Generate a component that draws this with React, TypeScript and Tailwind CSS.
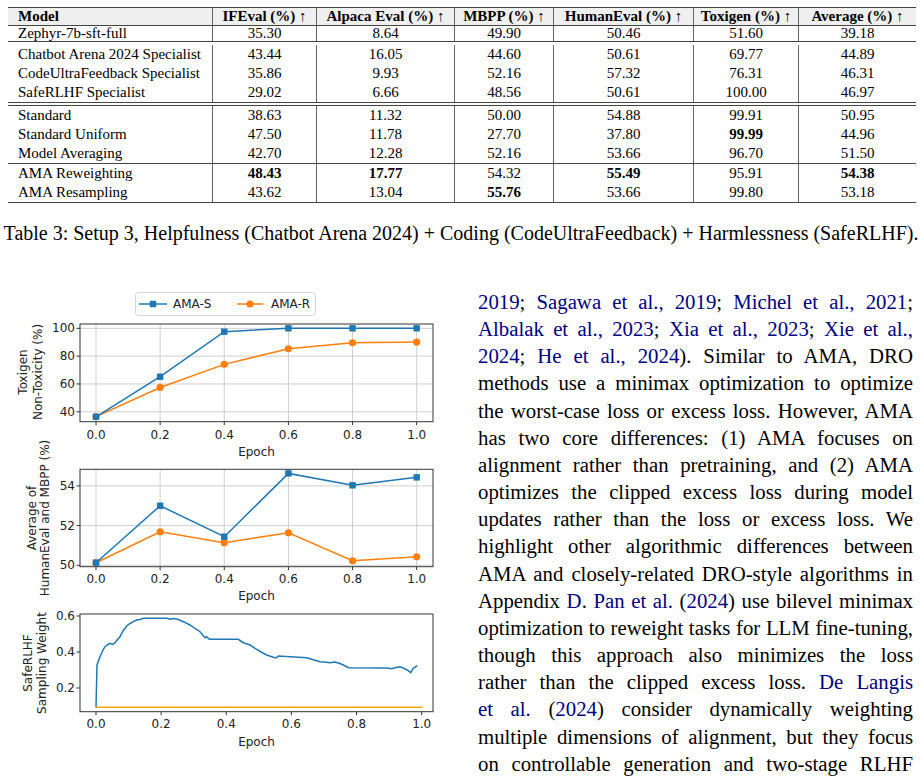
import React from 'react'

const BLUE = '#1f77b4'
const ORANGE = '#ff7f0e'
const SANS = "'DejaVu Sans', 'Liberation Sans', sans-serif"

type Tick = { p: number; label: string }

function Axes({
  top,
  bottom,
  xticks,
  yticks,
  grid,
  labelY,
  epochY,
  ylabels,
  ylabelMid,
}: {
  top: number
  bottom: number
  xticks: Tick[]
  yticks: Tick[]
  grid: boolean
  labelY: number
  epochY: number
  ylabels: { x: number; text: string }[]
  ylabelMid: number
}) {
  const left = 80
  const right = 433
  return (
    <g fontFamily={SANS} fontSize={12} fill="#222">
      {grid &&
        xticks.map((t) => (
          <line key={'gx' + t.label} x1={t.p} x2={t.p} y1={top} y2={bottom} stroke="#cfcfcf" strokeWidth={1} />
        ))}
      {grid &&
        yticks.map((t) => (
          <line key={'gy' + t.label} x1={left} x2={right} y1={t.p} y2={t.p} stroke="#cfcfcf" strokeWidth={1} />
        ))}
      <rect x={left} y={top} width={right - left} height={bottom - top} fill="none" stroke="#333" strokeWidth={1} />
      {xticks.map((t) => (
        <g key={'xt' + t.label}>
          <line x1={t.p} x2={t.p} y1={bottom} y2={bottom + 3.5} stroke="#333" />
          <text x={t.p} y={labelY} textAnchor="middle" dominantBaseline="central">
            {t.label}
          </text>
        </g>
      ))}
      {yticks.map((t) => (
        <g key={'yt' + t.label}>
          <line x1={left - 3.5} x2={left} y1={t.p} y2={t.p} stroke="#333" />
          <text x={75} y={t.p} textAnchor="end" dominantBaseline="central">
            {t.label}
          </text>
        </g>
      ))}
      <text x={(left + right) / 2} y={epochY} textAnchor="middle" dominantBaseline="central">
        Epoch
      </text>
      {ylabels.map((l) => (
        <text
          key={l.text}
          x={l.x}
          y={ylabelMid}
          textAnchor="middle"
          dominantBaseline="central"
          transform={`rotate(-90 ${l.x} ${ylabelMid})`}
        >
          {l.text}
        </text>
      ))}
    </g>
  )
}

const ex = (e: number) => 96 + e * 320.7
const epochs = [0, 0.2, 0.4, 0.6, 0.8, 1.0]
const xt: Tick[] = epochs.map((e) => ({ p: ex(e), label: e.toFixed(1) }))

function Series({ pts, color, marker }: { pts: [number, number][]; color: string; marker: 's' | 'o' }) {
  return (
    <g>
      <polyline points={pts.map((p) => p.join(',')).join(' ')} fill="none" stroke={color} strokeWidth={1.5} />
      {pts.map(([x, y], i) =>
        marker === 's' ? (
          <rect key={i} x={x - 3.2} y={y - 3.2} width={6.4} height={6.4} fill={color} />
        ) : (
          <circle key={i} cx={x} cy={y} r={3.6} fill={color} />
        ),
      )}
    </g>
  )
}

function ToxigenChart() {
  const y = (v: number) => 328.3 + (100 - v) * 1.3917
  const s = [36.4, 65.2, 97.6, 100, 100, 100]
  const r = [36.5, 57.5, 74.1, 85.3, 89.6, 90.1]
  return (
    <svg width={450} height={175} viewBox="0 285 450 175" className="block overflow-visible">
      <rect x={135.5} y={292.5} width={180} height={23} rx={3} fill="#fff" stroke="#d4d4d4" />
      <line x1={139} x2={167} y1={304} y2={304} stroke={BLUE} strokeWidth={1.5} />
      <rect x={149.8} y={300.8} width={6.4} height={6.4} fill={BLUE} />
      <text x={173} y={304} fontFamily={SANS} fontSize={12} fill="#222" dominantBaseline="central">
        AMA-S
      </text>
      <line x1={237} x2={263} y1={304} y2={304} stroke={ORANGE} strokeWidth={1.5} />
      <circle cx={250} cy={304} r={3.6} fill={ORANGE} />
      <text x={271} y={304} fontFamily={SANS} fontSize={12} fill="#222" dominantBaseline="central">
        AMA-R
      </text>
      <Axes
        top={324}
        bottom={421.7}
        xticks={xt}
        yticks={[100, 80, 60, 40].map((v) => ({ p: y(v), label: String(v) }))}
        grid
        labelY={435}
        epochY={452}
        ylabels={[
          { x: 23, text: 'Toxigen' },
          { x: 38, text: 'Non-Toxicity (%)' },
        ]}
        ylabelMid={372}
      />
      <Series pts={epochs.map((e, i) => [ex(e), y(r[i])])} color={ORANGE} marker="o" />
      <Series pts={epochs.map((e, i) => [ex(e), y(s[i])])} color={BLUE} marker="s" />
    </svg>
  )
}

function CodingChart() {
  const y = (v: number) => 565.3 - (v - 50) * 19.85
  const s = [50.13, 53.0, 51.44, 54.63, 54.03, 54.43]
  const r = [50.13, 51.69, 51.14, 51.64, 50.23, 50.43]
  return (
    <svg width={450} height={145} viewBox="0 460 450 145" className="block overflow-visible">
      <Axes
        top={469.3}
        bottom={566.7}
        xticks={xt}
        yticks={[54, 52, 50].map((v) => ({ p: y(v), label: String(v) }))}
        grid
        labelY={578.5}
        epochY={596}
        ylabels={[
          { x: 31.7, text: 'Average of' },
          { x: 45, text: 'HumanEval and MBPP (%)' },
        ]}
        ylabelMid={518}
      />
      <Series pts={epochs.map((e, i) => [ex(e), y(r[i])])} color={ORANGE} marker="o" />
      <Series pts={epochs.map((e, i) => [ex(e), y(s[i])])} color={BLUE} marker="s" />
    </svg>
  )
}

// traced from the sampling weight curve
const weightCurve: [number, number][] = [
  [96, 707.3], [97, 665], [100, 656.7], [103, 650], [105, 646.7], [108, 644.5], [110, 643.3],
  [112.7, 644.5], [115, 642.7], [117, 640], [120, 636.7], [123, 631], [126.7, 626], [130, 623.5],
  [133.3, 621.7], [136.7, 620], [140, 619.5], [143.3, 618.3], [166.7, 618.3], [170, 619.3],
  [173, 618.6], [176.7, 619], [180, 620.2], [183.3, 621.7], [190, 625], [195, 628.5], [200, 631.7],
  [205, 637.7], [206.7, 636.7], [209.3, 639.3], [238.3, 639.3], [243.3, 642.7], [250, 645],
  [256.7, 649.3], [262, 652.5], [266.7, 655], [273.3, 657.3], [276, 658], [278.3, 656], [306.7, 657.7],
  [311.7, 659.3], [316, 660.5], [320, 661.7], [325, 662], [330, 662.7], [335, 662], [340, 663.5],
  [343.3, 665], [348.3, 667.7], [386.7, 668], [391.7, 668.7], [395, 667.7], [400, 666.7], [403.3, 668],
  [408.3, 670.7], [410.7, 672.7], [413.3, 668.3], [417.3, 665.7],
]

function WeightChart() {
  const x3 = (e: number) => 96 + e * 325.7
  return (
    <svg width={450} height={155} viewBox="0 605 450 155" className="block overflow-visible">
      <Axes
        top={614}
        bottom={711.7}
        xticks={epochs.map((e) => ({ p: x3(e), label: e.toFixed(1) }))}
        yticks={[
          { p: 616, label: '0.6' },
          { p: 652, label: '0.4' },
          { p: 688, label: '0.2' },
        ]}
        grid={false}
        labelY={724.3}
        epochY={741.7}
        ylabels={[
          { x: 28, text: 'SafeRLHF' },
          { x: 41.7, text: 'Sampling Weight' },
        ]}
        ylabelMid={663}
      />
      <line x1={96} x2={422.7} y1={707.3} y2={707.3} stroke="#ffa500" strokeWidth={1.5} />
      <polyline points={weightCurve.map((p) => p.join(',')).join(' ')} fill="none" stroke={BLUE} strokeWidth={1.5} />
    </svg>
  )
}

const cols = 'grid grid-cols-[205px_104px_138px_99px_140px_105px_117px]'
const headers = ['IFEval', 'Alpaca Eval', 'MBPP', 'HumanEval', 'Toxigen', 'Average']

type Row = { name: string; v: string[] }
const groups: { rows: Row[]; cls: string; first?: string }[] = [
  { rows: [{ name: 'Zephyr-7b-sft-full', v: ['35.30', '8.64', '49.90', '50.46', '51.60', '39.18'] }], cls: 'border-b border-[#444]', first: 'h-[15px] leading-[15px]' },
  {
    rows: [
      { name: 'Chatbot Arena 2024 Specialist', v: ['43.44', '16.05', '44.60', '50.61', '69.77', '44.89'] },
      { name: 'CodeUltraFeedback Specialist', v: ['35.86', '9.93', '52.16', '57.32', '76.31', '46.31'] },
      { name: 'SafeRLHF Specialist', v: ['29.02', '6.66', '48.56', '50.61', '100.00', '46.97'] },
    ],
    cls: 'border-b-[4px] border-double border-[#444]',
    first: 'h-[22px] pt-[3px] leading-[19px]',
  },
  {
    rows: [
      { name: 'Standard', v: ['38.63', '11.32', '50.00', '54.88', '99.91', '50.95'] },
      { name: 'Standard Uniform', v: ['47.50', '11.78', '27.70', '37.80', '*99.99', '44.96'] },
      { name: 'Model Averaging', v: ['42.70', '12.28', '52.16', '53.66', '96.70', '51.50'] },
    ],
    cls: 'border-b border-[#444]',
  },
  {
    rows: [
      { name: 'AMA Reweighting', v: ['*48.43', '*17.77', '54.32', '*55.49', '95.91', '*54.38'] },
      { name: 'AMA Resampling', v: ['43.62', '13.04', '*55.76', '53.66', '99.80', '53.18'] },
    ],
    cls: 'border-b border-[#444]',
  },
]

function ResultsTable() {
  return (
    <div className="ml-[8px] w-[908px] pt-[7px] text-[15px] text-black">
      <div className={`${cols} border-y border-[#444] bg-[#efefef] h-[19px] leading-[17px] font-bold`}>
        <div className="pl-[10px] border-r border-[#666]">Model</div>
        {headers.map((h, i) => (
          <div key={h} className={`text-center ${i < 5 ? 'border-r border-[#666]' : ''}`}>
            {h} (%) <span className="font-normal">↑</span>
          </div>
        ))}
      </div>
      {groups.map((g, gi) => (
        <div key={gi} className={g.cls}>
          {g.rows.map((r, ri) => (
            <div key={r.name} className={`${cols} ${ri === 0 && g.first ? g.first : 'h-[19px] leading-[19px]'}`}>
              <div className="pl-[10px] border-r border-[#666] whitespace-nowrap">{r.name}</div>
              {r.v.map((v, i) => (
                <div
                  key={i}
                  className={`text-center ${i < 5 ? 'border-r border-[#666]' : ''} ${v.startsWith('*') ? 'font-bold' : ''}`}
                >
                  {v.replace('*', '')}
                </div>
              ))}
            </div>
          ))}
        </div>
      ))}
    </div>
  )
}

const L = (t: string) => <span className="text-[#000080]">{t}</span>

const bodyLines: React.ReactNode[] = [
  <>{L('2019')}; {L('Sagawa et al., 2019')}; {L('Michel et al., 2021')};</>,
  <>{L('Albalak et al., 2023')}; {L('Xia et al., 2023')}; {L('Xie et al.,')}</>,
  <>{L('2024')}; {L('He et al., 2024')}).{'  '}Similar to AMA, DRO</>,
  <>methods use a minimax optimization to optimize</>,
  <>the worst-case loss or excess loss. However, AMA</>,
  <>has two core differences: (1) AMA focuses on</>,
  <>alignment rather than pretraining, and (2) AMA</>,
  <>optimizes the clipped excess loss during model</>,
  <>updates rather than the loss or excess loss. We</>,
  <>highlight other algorithmic differences between</>,
  <>AMA and closely-related DRO-style algorithms in</>,
  <>Appendix {L('D')}. {L('Pan et al.')} ({L('2024')}) use bilevel minimax</>,
  <>optimization to reweight tasks for LLM fine-tuning,</>,
  <>though this approach also minimizes the loss</>,
  <>rather than the clipped excess loss. {L('De Langis')}</>,
  <>{L('et al.')} ({L('2024')}) consider dynamically weighting</>,
  <>multiple dimensions of alignment, but they focus</>,
  <>on controllable generation and two-stage RLHF</>,
  <>which are orthogonal to our work that focuses on</>,
]

export default function App() {
  return (
    <div className="w-[922px] h-[782px] overflow-hidden bg-white text-black font-['Liberation_Serif',serif]">
      <ResultsTable />
      <p className="mt-[18px] text-center whitespace-nowrap text-[20px] leading-[24px]">
        Table 3: Setup 3, Helpfulness (Chatbot Arena 2024) + Coding (CodeUltraFeedback) + Harmlessness (SafeRLHF).
      </p>
      <div className="mt-[40px] flex">
        <div className="w-[450px] shrink-0">
          <ToxigenChart />
          <CodingChart />
          <WeightChart />
        </div>
        <div className="ml-[28px] w-[435px] pt-[3px] text-[20.8px] leading-[27.15px]">
          {bodyLines.map((l, i) => (
            <div key={i} className="text-justify [text-align-last:justify]">
              {l}
            </div>
          ))}
        </div>
      </div>
    </div>
  )
}
